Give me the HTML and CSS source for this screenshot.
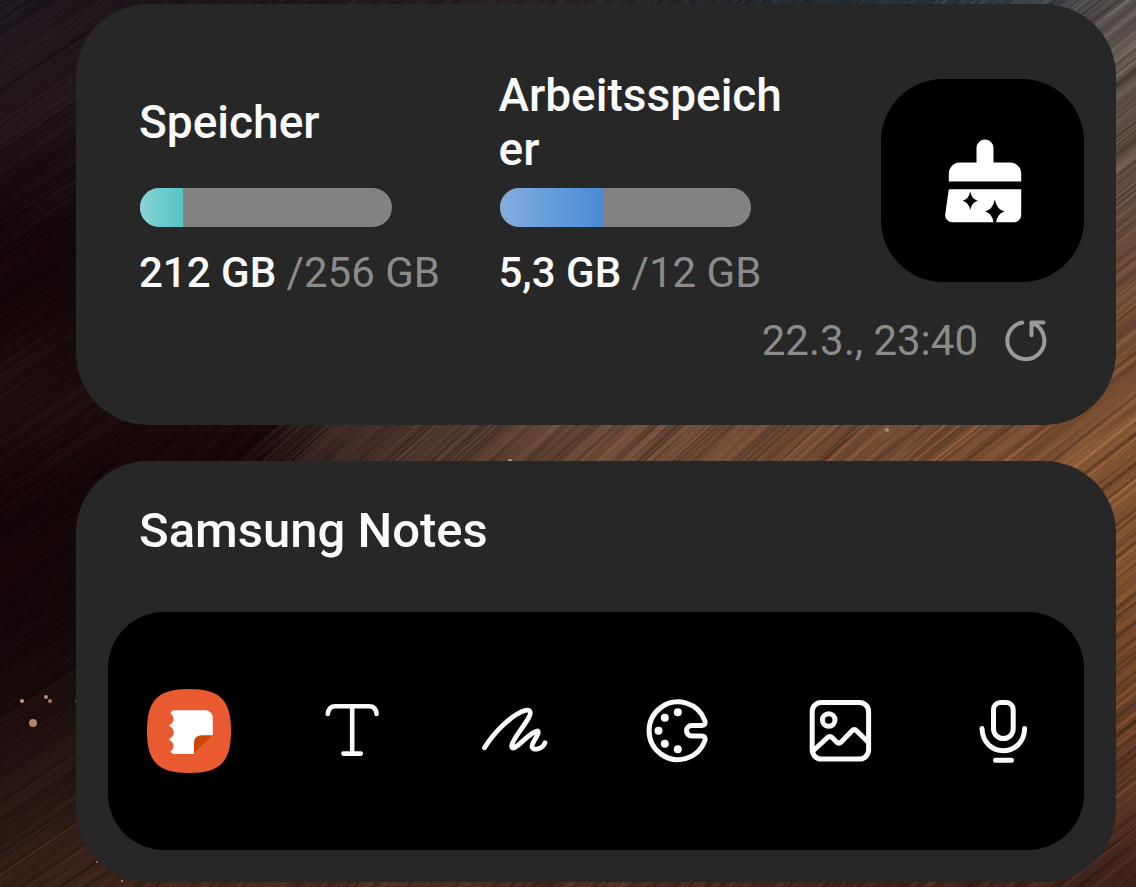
FILE: index.html
```html
<!DOCTYPE html>
<html lang="de">
<head>
<meta charset="utf-8">
<meta name="viewport" content="width=device-width, initial-scale=1">
<title>Widgets</title>
<link rel="stylesheet" href="styles.css">
</head>
<body>
<canvas class="wallpaper" aria-hidden="true"></canvas>
<main class="widgets">
  <section class="card device" aria-label="Gerätewartung">
    <div class="device-main">
      <div class="stats">
        <div class="stat">
          <h2 class="stat-title title">Speicher</h2>
          <div class="track" role="progressbar" aria-label="Speicher" aria-valuenow="17"><div class="fill fill-storage" style="width:17%"></div></div>
          <p class="value"><strong class="used">212 GB</strong> /256 GB</p>
        </div>
        <div class="stat">
          <h2 class="stat-title title">Arbeitsspeicher</h2>
          <div class="track" role="progressbar" aria-label="Arbeitsspeicher" aria-valuenow="41"><div class="fill fill-memory" style="width:41%"></div></div>
          <p class="value"><strong class="used">5,3 GB</strong> /12 GB</p>
        </div>
      </div>
      <button class="clean" type="button" aria-label="Optimieren">
        <svg class="icon" viewBox="0 0 84 84" fill="#fff">
          <path d="M35.5 23.5V9a8.5 8.5 0 0 1 17 0v14.5H69a11.2 11.2 0 0 1 11.2 11.2v7.8H7.8v-7.8A11.2 11.2 0 0 1 19 23.500Z"/>
          <path d="M7.800 50.200H80.200V76a7.200 7.200 0 0 1-7.200 7.200H11a7 7 0 0 1-6.800-7.700Z"/>
          <path fill="#000" d="M29.200 52.300Q30.500 60.300 36.800 61.800Q30.500 63.300 29.200 71.300Q27.900 63.300 21.600 61.800Q27.900 60.300 29.200 52.300ZM53.800 60.500Q55.800 70.500 63.500 72.500Q56 74.500 55 84H52.600Q51.600 74.500 44.100 72.500Q51.800 70.500 53.800 60.500Z"/>
        </svg>
      </button>
    </div>
    <div class="updated">
      <time datetime="03-22T23:40">22.3., 23:40</time>
      <button class="refresh" type="button" aria-label="Aktualisieren">
        <svg class="refresh-icon" viewBox="0 0 44 44">
          <path d="M18.200 3.500A18.500 18.500 0 1 0 29.500 4.800M39.500 3.500H27.500V16.300"/>
        </svg>
      </button>
    </div>
  </section>

  <section class="card notes">
    <h2 class="title notes-title">Samsung Notes</h2>
    <div class="tools">
      <button class="tool" type="button" aria-label="Samsung Notes öffnen">
        <svg class="icon" viewBox="0 0 84 84">
          <path fill="#e95a31" d="M42 0C73 0 84 11 84 42S73 84 42 84 0 73 0 42 11 0 42 0Z"/>
          <path fill="#fff" d="M27.500 21.300H58.500A7.300 7.300 0 0 1 65.800 28.600V46.300L47 65H27.500Q24.500 65 23.500 62.500Q26.500 60.500 26.500 57.200Q26.500 53 21.700 50.300Q26.700 48 26.700 43.400Q26.700 39 21.700 36.600Q26.500 34 26.500 30Q26.500 26.500 23.500 24.500Q24.300 21.300 27.500 21.300Z"/>
          <path fill="#e95a31" d="M66.500 45.500V66H46.500Z"/>
          <path fill="#c94700" d="M65.800 46.300L47 65V54.300Q47 46.300 55 46.300Z"/>
        </svg>
      </button>
      <button class="tool" type="button" aria-label="Text">
        <svg class="icon line" viewBox="0 0 84 84" stroke-width="4.600"><path d="M17.800 25Q18.500 17.200 25.500 17.200H59Q66 17.200 66.600 25M42.200 17.200V64.600M33.400 64.600H50.800"/></svg>
      </button>
      <button class="tool" type="button" aria-label="Handschrift">
        <svg class="icon line" viewBox="0 0 84 84" stroke-width="4.800"><path d="M11.500 58.700C22 42 39 26 51 21.800C58 19.500 58.500 24 55.500 29C50 39 39 51 38.600 57C39 66 57 42 64.500 42C68 43.500 58 54 59 58C60.500 62.500 70 59.500 72 53.700"/></svg>
      </button>
      <button class="tool" type="button" aria-label="Zeichnung">
        <svg class="icon line" viewBox="0 0 84 84" stroke-width="5"><path d="M70 32A28.800 28.800 0 1 0 70 51.500Q70.800 47 66.500 47H56.700A5.200 5.200 0 0 1 56.700 36.600H66.500Q70.800 36.600 70 32Z"/><g fill="#fff" stroke="none"><circle cx="42.800" cy="23.300" r="4"/><circle cx="29.800" cy="28.700" r="4"/><circle cx="23.500" cy="41.700" r="4"/><circle cx="29.800" cy="54.700" r="4"/><circle cx="42.800" cy="60.200" r="4"/></g></svg>
      </button>
      <button class="tool" type="button" aria-label="Bild">
        <svg class="icon line" viewBox="0 0 84 84" stroke-width="5"><rect x="14.200" y="13.500" width="56.400" height="56.500" rx="9"/><circle cx="30.700" cy="31" r="6.300"/><path d="M15 62L29.500 48.500Q32 46.500 34.300 48.800L38.500 53Q41 55.200 43.500 52.700L53.800 42Q56.300 39.500 58.800 42L70 53"/></svg>
      </button>
      <button class="tool" type="button" aria-label="Sprachaufnahme">
        <svg class="icon line" viewBox="0 0 84 84" stroke-width="5"><path d="M39.500 13.500H45.200A7 7 0 0 1 52.200 20.500V39.700A9.850 9.850 0 0 1 32.500 39.700V20.500A7 7 0 0 1 39.500 13.500ZM21 39.500C22 69 62.700 69 63.700 39.500M34.500 71.300H50.500"/></svg>
      </button>
    </div>
  </section>
</main>
<script src="wallpaper.js"></script>
</body>
</html>
```

FILE: styles.css
```css
* {
  box-sizing: border-box;
}

body {
  margin: 0;
  background: #1b0e0e;
  color: #fafafa;
  font-family: Roboto, "Noto Sans", sans-serif;
  overflow: hidden;
}

.wallpaper {
  position: fixed;
  inset: 0;
  width: 100%;
  height: 100%;
  z-index: -1;
}

.widgets {
  display: flex;
  flex-direction: column;
  gap: 36px;
  padding: 4px 20px 4px 76px;
}

.card {
  background: #272727;
  border-radius: 72px;
  padding: 64px 32px 32px;
}

.title {
  margin: 0;
  font-size: 46px;
  line-height: 54px;
  font-weight: 500;
}

.device {
  padding-bottom: 58px;
}

.device-main {
  display: flex;
  align-items: flex-start;
  gap: 79px;
  padding-left: 31px;
}

.stats {
  flex: 1;
  display: grid;
  grid-template-columns: 1fr 1fr;
  gap: 56px;
}

.stat {
  display: flex;
  flex-direction: column;
  min-width: 0;
}

.stat-title {
  display: flex;
  align-items: center;
  flex: 1;
  min-height: 108px;
  overflow-wrap: anywhere;
}

.track {
  width: 83%;
  height: 39px;
  margin: 12px 0 20px 1px;
  border-radius: 20px;
  background: #838383;
  overflow: hidden;
}

.fill {
  height: 100%;
}

.fill-storage {
  background: linear-gradient(90deg, #86d5d5, #56c3c5);
}

.fill-memory {
  background: linear-gradient(90deg, #82aede, #4a8bd6);
}

.value {
  margin: 0;
  font-size: 42px;
  line-height: 52px;
  color: #8b8b8b;
  white-space: nowrap;
}

.used {
  font-weight: 500;
  color: #fafafa;
}

button {
  display: flex;
  align-items: center;
  justify-content: center;
  padding: 0;
  border: 0;
  background: none;
  cursor: pointer;
}

.clean {
  width: 203px;
  height: 203px;
  margin-top: 11px;
  border-radius: 62px;
  background: #000;
}

.icon {
  width: 84px;
  height: 84px;
}

.line,
.refresh-icon {
  fill: none;
  stroke: #fafafa;
  stroke-linecap: round;
  stroke-linejoin: round;
}

.updated {
  display: flex;
  align-items: center;
  justify-content: flex-end;
  gap: 26px;
  padding: 16px 36px 0 0;
  font-size: 42px;
  line-height: 52px;
  color: #8b8b8b;
}

.refresh-icon {
  width: 44px;
  height: 44px;
  stroke: #9a9a9a;
  stroke-width: 4;
}

.notes {
  padding-top: 43px;
}

.notes-title {
  padding-left: 31px;
  font-size: 49px;
}

.tools {
  display: grid;
  grid-template-columns: repeat(6, 1fr);
  margin-top: 54px;
  min-height: 238px;
  border-radius: 56px;
  background: #000;
}
```

FILE: wallpaper.js
```js
// Paints diagonal light streaks over a coarse colour field.
const canvas = document.querySelector(".wallpaper");
const ctx = canvas.getContext("2d");
const xs = [0, 76, 260, 340, 600, 960, 1136];
const ys = [0, 100, 230, 330, 400, 490, 640, 800, 887];
const field = [
  ["1e1820", "1c141a", "1c1519", "20181c", "262226", "1e3240", "625a56"],
  ["21161a", "211519", "201518", "241a1c", "382c2a", "4b4440", "5d4f47"],
  ["150709", "140608", "150708", "30201c", "503a30", "5c473b", "654b3c"],
  ["160608", "170709", "160608", "38251f", "5a4032", "684734", "6e4934"],
  ["22110f", "22100e", "180708", "3c2925", "66483a", "724b34", "7b4f32"],
  ["140507", "140507", "160608", "443029", "684732", "784d31", "805230"],
  ["150709", "150809", "1c0d0c", "3a251d", "5a3a28", "6b432b", "744829"],
  ["251512", "2b1914", "342019", "3a241b", "4a2d20", "4e2e20", "593524"],
  ["351f17", "42271b", "4a2c1e", "482c20", "4a2c20", "3c211a", "3b211a"]
].map(row => row.map(h => [0, 2, 4].map(i => parseInt(h.slice(i, i + 2), 16))));

let seed = 7;
function rand() {
  seed = (seed * 1664525 + 1013904223) % 4294967296;
  return seed / 4294967296;
}

function locate(stops, v) {
  let i = 0;
  while (i < stops.length - 2 && v > stops[i + 1]) i++;
  const t = (v - stops[i]) / (stops[i + 1] - stops[i]);
  return [i, Math.max(0, Math.min(1, t))];
}

function colourAt(x, y) {
  const [i, u] = locate(xs, x);
  const [j, v] = locate(ys, y);
  return [0, 1, 2].map(k =>
    (field[j][i][k] * (1 - u) + field[j][i + 1][k] * u) * (1 - v) +
    (field[j + 1][i][k] * (1 - u) + field[j + 1][i + 1][k] * u) * v);
}

function dot(x, y, r, colour) {
  ctx.fillStyle = colour;
  ctx.beginPath();
  ctx.arc(x, y, r, 0, Math.PI * 2);
  ctx.fill();
}

function streaks(count, minLength, spread, minWidth, widthSpread, alpha) {
  for (let n = 0; n < count; n++) {
    const x = rand() * 1236 - 50;
    const y = rand() * 987 - 50;
    const deg = x < 160 ? 34 : x < 900 ? 42 : 38;
    const a = deg * Math.PI / 180;
    const len = minLength + rand() * spread;
    const dx = Math.cos(a) * len;
    const dy = Math.sin(a) * len;
    const gain = 0.55 + rand() * 0.9;
    const c = colourAt(x, y).map(v => Math.round(Math.min(255, v * gain)));
    const g = ctx.createLinearGradient(x - dx, y + dy, x + dx, y - dy);
    g.addColorStop(0, `rgba(${c},0)`);
    g.addColorStop(0.3, `rgba(${c},${alpha})`);
    g.addColorStop(0.7, `rgba(${c},${alpha})`);
    g.addColorStop(1, `rgba(${c},0)`);
    ctx.strokeStyle = g;
    ctx.lineWidth = minWidth + rand() * widthSpread;
    ctx.beginPath();
    ctx.moveTo(x - dx, y + dy);
    ctx.lineTo(x + dx, y - dy);
    ctx.stroke();
  }
}

function paint() {
  seed = 7;
  canvas.width = innerWidth;
  canvas.height = innerHeight;
  ctx.scale(innerWidth / 1136, innerHeight / 887);
  for (let y = 0; y < 887; y += 8) {
    for (let x = 0; x < 1136; x += 8) {
      ctx.fillStyle = `rgb(${colourAt(x + 4, y + 4).map(Math.round)})`;
      ctx.fillRect(x, y, 9, 9);
    }
  }
  streaks(1500, 90, 90, 3, 4, 0.35);
  streaks(3500, 80, 100, 1, 1.5, 0.6);
  dot(22, 701, 2, "#c39a8a");
  dot(46, 697, 2, "#b88d7c");
  dot(50, 701, 2, "#a47a6a");
  dot(33, 723, 4, "#b48472");
  dot(76, 701, 1, "#a47a6a");
  dot(97, 862, 1, "#c08a68");
  dot(122, 881, 1, "#d09a78");
  dot(510, 461, 2, "#b9a596");
  dot(887, 430, 2, "#a98f80");
}

paint();
addEventListener("resize", paint);
```
